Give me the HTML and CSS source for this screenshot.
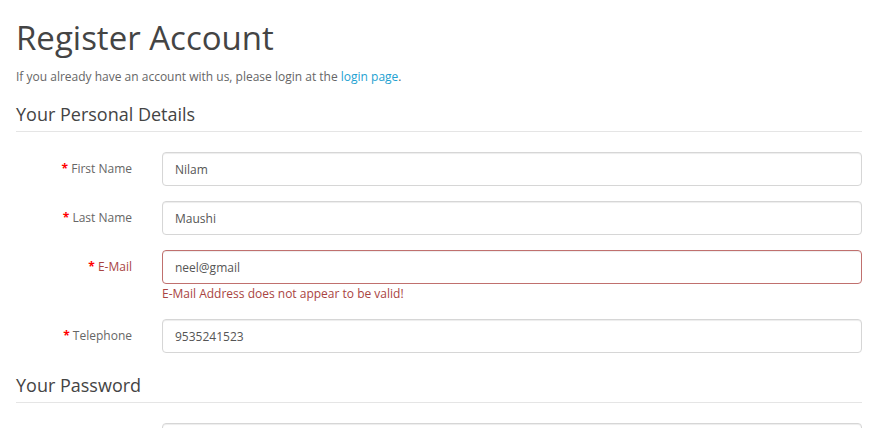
FILE: index.html
```html
<!DOCTYPE html>
<html lang="en">
<head>
<meta charset="utf-8">
<title>Register Account</title>
<link rel="stylesheet" href="styles.css">
</head>
<body>
<div class="container">
  <h1 class="page-title">Register Account</h1>
  <p class="intro">If you already have an account with us, please login at the <a href="#" class="link">login page</a>.</p>
  <form class="form-horizontal">
    <fieldset class="fieldset">
      <legend class="legend">Your Personal Details</legend>
      <div class="form-group required">
        <label class="control-label" for="firstname">First Name</label>
        <div class="field"><input class="form-control" id="firstname" type="text" value="Nilam"></div>
      </div>
      <div class="form-group required">
        <label class="control-label" for="lastname">Last Name</label>
        <div class="field"><input class="form-control" id="lastname" type="text" value="Maushi"></div>
      </div>
      <div class="form-group required has-error">
        <label class="control-label" for="email">E-Mail</label>
        <div class="field">
          <input class="form-control" id="email" type="text" value="neel@gmail">
          <div class="text-danger">E-Mail Address does not appear to be valid!</div>
        </div>
      </div>
      <div class="form-group required">
        <label class="control-label" for="telephone">Telephone</label>
        <div class="field"><input class="form-control" id="telephone" type="text" value="9535241523"></div>
      </div>
    </fieldset>
    <fieldset class="fieldset">
      <legend class="legend">Your Password</legend>
      <div class="form-group required">
        <label class="control-label" for="password">Password</label>
        <div class="field"><input class="form-control" id="password" type="password" value=""></div>
      </div>
    </fieldset>
  </form>
</div>
</body>
</html>
```

FILE: styles.css
```css
* { box-sizing: border-box; }
html, body { margin: 0; padding: 0; background: #fff; }
body {
  font-family: "Open Sans", "DejaVu Sans", sans-serif;
  font-size: 12px;
  line-height: 20px;
  color: #666;
  overflow: hidden;
}
.container { padding: 0 16px; }
.page-title {
  font-family: "Open Sans", sans-serif;
  font-size: 33px;
  font-weight: 400;
  line-height: 1.1;
  color: #444;
  margin: 20px 0 11px;
}
.intro { margin: 0 0 10px; }
.link { color: #23a1d1; text-decoration: none; }
.form-horizontal { margin: 0; }
.fieldset { border: 0; margin: 0; padding: 0; min-width: 0; }
.legend {
  display: block;
  width: 100%;
  padding: 7px 0;
  margin: 0 0 20px;
  font-size: 18px;
  line-height: 20px;
  color: #444;
  border: 0;
  border-bottom: 1px solid #e5e5e5;
}
.form-group {
  display: flex;
  align-items: flex-start;
  margin: 0 -15px 15px;
}
.control-label {
  flex: 0 0 16.6667%;
  padding: 7px 15px 0;
  text-align: right;
  font-weight: 400;
  color: #666;
}
.required .control-label::before {
  content: "* ";
  color: #f00;
  font-weight: bold;
}
.field { flex: 1 1 auto; padding: 0 15px; }
.form-control {
  display: block;
  width: 100%;
  height: 34px;
  padding: 6px 12px;
  font-family: "Open Sans", sans-serif;
  font-size: 12px;
  line-height: 1.42857;
  color: #555;
  background: #fff;
  border: 1px solid #d6d6d6;
  border-radius: 4px;
  box-shadow: inset 0 1px 1px rgba(0,0,0,.075);
  outline: none;
}
.has-error .control-label { color: #a94442; }
.has-error .form-control { border-color: #c0706e; }
.text-danger { color: #a94442; }
```
